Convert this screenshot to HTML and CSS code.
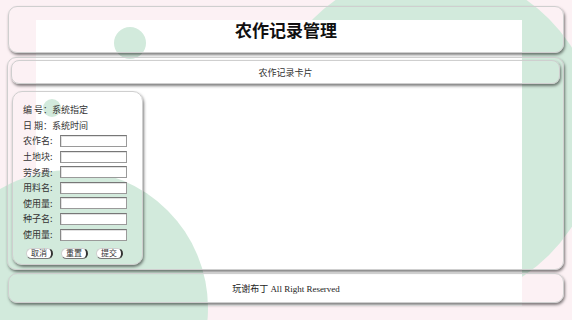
FILE: index.html
```html
<!DOCTYPE html>
<html lang="zh">
<head>
<meta charset="utf-8">
<title>农作记录管理</title>
<link rel="stylesheet" href="styles.css">
</head>
<body>
<div class="bg">
  <div class="blob-tr"></div>
  <div class="sheet"></div>
  <div class="dot dot-a"></div>
  <div class="dot dot-b"></div>
  <div class="blob-bl"></div>
</div>
<div class="page">
  <header class="box head"><h1>农作记录管理</h1></header>
  <main class="box main">
    <div class="box sub">农作记录卡片</div>
    <form class="box card">
      <div class="row">编 号：系统指定</div>
      <div class="row">日 期：系统时间</div>
      <div class="row"><span class="lbl">农作名:</span><input class="field" type="text"></div>
      <div class="row"><span class="lbl">土地块:</span><input class="field" type="text"></div>
      <div class="row"><span class="lbl">劳务费:</span><input class="field" type="text"></div>
      <div class="row"><span class="lbl">用料名:</span><input class="field" type="text"></div>
      <div class="row"><span class="lbl">使用量:</span><input class="field" type="text"></div>
      <div class="row"><span class="lbl">种子名:</span><input class="field" type="text"></div>
      <div class="row"><span class="lbl">使用量:</span><input class="field" type="text"></div>
      <div class="btns">
        <button class="btn" type="button">取消</button>
        <button class="btn" type="button">重置</button>
        <button class="btn" type="button">提交</button>
      </div>
    </form>
  </main>
  <footer class="box foot">玩谢布丁 All Right Reserved</footer>
</div>
</body>
</html>
```

FILE: styles.css
```css
html, body {
  margin: 0;
  padding: 0;
}
body {
  width: 572px;
  height: 320px;
  overflow: hidden;
  position: relative;
  background: #fcf1f4;
  font-family: "Noto Sans CJK SC", "Noto Sans", sans-serif;
  color: #333;
}
.bg {
  position: absolute;
  left: 0;
  top: 0;
  width: 572px;
  height: 320px;
  overflow: hidden;
}
.blob-tr {
  position: absolute;
  left: 264px;
  top: -30px;
  width: 334px;
  height: 334px;
  border-radius: 50%;
  background: #d2eadc;
}
.sheet {
  position: absolute;
  left: 36px;
  top: 20px;
  width: 486px;
  height: 286px;
  background: #fff;
}
.dot {
  position: absolute;
  border-radius: 50%;
  background: #d2eadc;
}
.dot-a {
  left: 114px;
  top: 27px;
  width: 32px;
  height: 32px;
}
.dot-b {
  left: 43px;
  top: 99px;
  width: 18px;
  height: 18px;
}
.blob-bl {
  position: absolute;
  left: -68px;
  top: 170px;
  width: 276px;
  height: 276px;
  border-radius: 50%;
  background: #d2eadc;
}
.page {
  position: relative;
  padding: 6px 8px 0 7px;
  display: flex;
  flex-direction: column;
}
.box {
  box-sizing: border-box;
  border: 1px solid #cfcfcf;
  border-radius: 9px;
  box-shadow: 1px 2px 3px rgba(0, 0, 0, 0.5);
}
.head {
  height: 47px;
  margin-left: 1px;
  display: flex;
  align-items: center;
  justify-content: center;
}
.head h1 {
  margin: 0;
  font-size: 17px;
  font-weight: bold;
  color: #111;
  letter-spacing: 0;
}
.main {
  margin-top: 4px;
  height: 213px;
  padding: 2px 3px;
  display: flex;
  flex-direction: column;
  align-items: flex-start;
}
.sub {
  width: 100%;
  height: 24px;
  border-radius: 8px;
  display: flex;
  align-items: center;
  justify-content: center;
  font-size: 9px;
  color: #333;
}
.card {
  margin: 7px 0 0 1px;
  width: 131px;
  height: 174px;
  border-radius: 10px;
  padding: 10px 0 0 10px;
  display: grid;
  grid-auto-rows: 15.6px;
  align-content: start;
}
.row {
  display: flex;
  align-items: center;
  font-size: 9px;
  line-height: 1;
  white-space: pre;
}
.lbl {
  width: 37px;
  flex: none;
}
.field {
  box-sizing: border-box;
  width: 67px;
  height: 12px;
  margin: 0;
  padding: 0;
  border: 1px solid #9a9a9a;
  border-top-color: #777;
  border-left-color: #888;
  background: #fff;
  box-shadow: inset 1px 1px 0 #e2e2e2;
}
.btns {
  display: flex;
  gap: 8px;
  padding-left: 3px;
  margin-top: 6px;
  align-items: center;
}
.btn {
  box-sizing: border-box;
  width: 27px;
  height: 11px;
  margin: 0;
  padding: 0;
  font-family: "Noto Sans CJK SC", sans-serif;
  font-size: 8px;
  line-height: 1;
  color: #333;
  background: #fff;
  border: 1px solid #d0d0d0;
  border-right: 2px solid #333;
  border-bottom: 1px solid #777;
  border-radius: 6px;
}
.foot {
  margin-top: 3px;
  margin-left: 1px;
  height: 30px;
  display: flex;
  align-items: center;
  justify-content: center;
  font-family: "Liberation Serif", "Noto Sans CJK SC", serif;
  font-size: 9px;
  color: #222;
}
```
